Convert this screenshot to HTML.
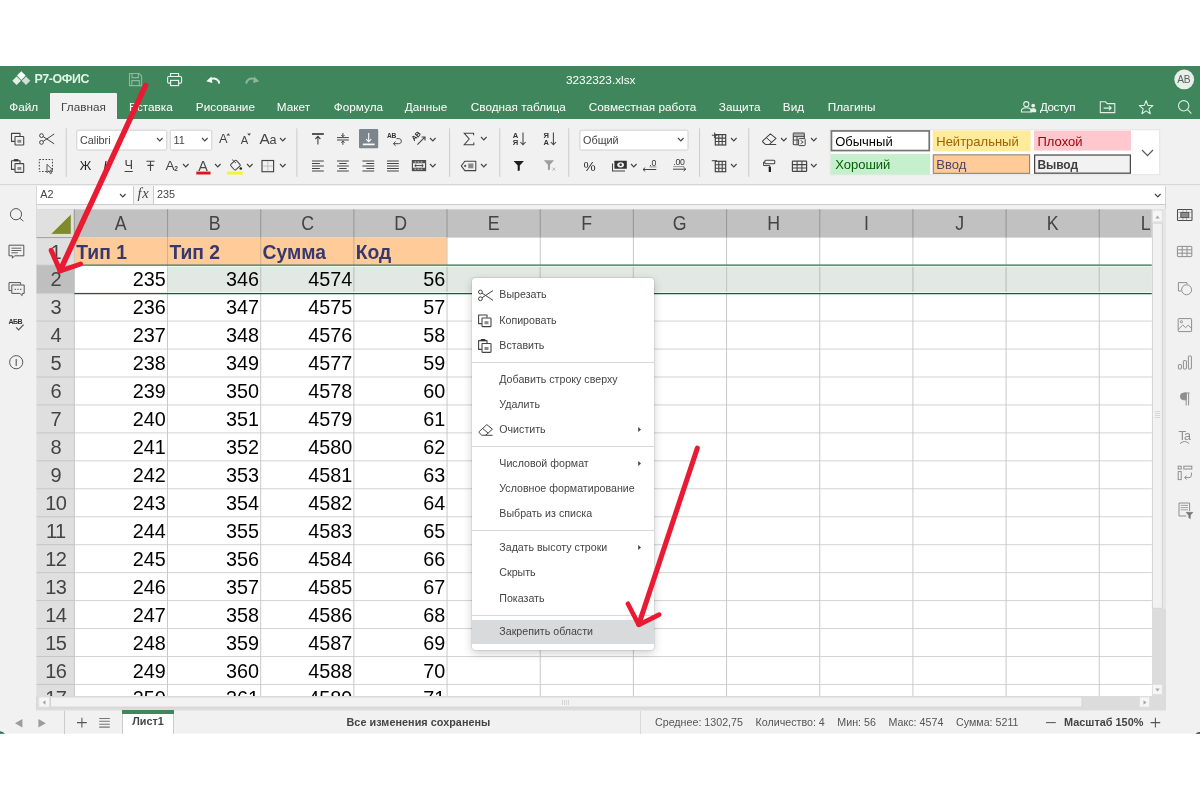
<!DOCTYPE html>
<html lang="ru"><head><meta charset="utf-8"><title>3232323.xlsx</title>
<style>
*{box-sizing:border-box}
html,body{margin:0;padding:0;background:#fff}
body{width:1200px;height:800px;overflow:hidden;position:relative;font-family:"Liberation Sans",sans-serif;font-size:10.8px;color:#444}
#app{position:absolute;left:0;top:0;width:1200px;height:800px;overflow:hidden;will-change:transform}
.a{position:absolute}
.t{position:absolute;white-space:nowrap;line-height:1}
svg{position:absolute;overflow:visible}
.ch{position:absolute;top:0;height:28px;line-height:29px;text-align:center;font-size:20.4px;color:#444;white-space:nowrap;transform:scaleX(.87)}
.rh{position:absolute;left:1px;width:38px;height:28px;line-height:29px;text-align:center;font-size:20px;color:#444;white-space:nowrap;letter-spacing:-0.6px;text-indent:-0.6px}
.c{position:absolute;height:28px;line-height:29px;text-align:right;font-size:19.8px;color:#000;white-space:nowrap;padding-right:1.7px}
.hc{position:absolute;height:28px;line-height:29px;font-size:19.3px;font-weight:bold;color:#38386c;white-space:nowrap;padding-left:1.9px}
.sep{position:absolute;width:1px;background:#cbcbcb;top:128.5px;height:48px}
</style></head>
<body>
<div id="app">
<div class="a" style="left:0px;top:66px;width:1200px;height:53px;background:#40865c;"></div>
<svg style="left:12px;top:70.5px" width="19" height="15" viewBox="0 0 19 15"><path d="M9.3 0.3 L13.6 4.6 L9.3 8.9 L5 4.6 Z" fill="#fff"/><path d="M4.6 5.4 L8.9 9.7 L4.6 14 L0.3 9.7 Z" fill="#e4efe8"/><path d="M14 5.4 L18.3 9.7 L14 14 L9.7 9.7 Z" fill="#cfe0d5"/></svg>
<div class="t" style="left:34.5px;top:72.70px;font-size:12.4px;color:#def7e6;font-weight:bold;letter-spacing:-0.4px;">Р7-ОФИС</div>
<div class="t" style="left:566px;top:75.01px;font-size:11.8px;color:#fff;">3232323.xlsx</div>
<svg style="left:1173px;top:68px" width="23" height="23" viewBox="1173 68 23 23"><circle cx="1184.2" cy="79.4" r="9.9" fill="#e8efea"/></svg>
<div class="t" style="left:1177.2px;top:74.57px;font-size:10.2px;color:#56655b;letter-spacing:-0.2px;">AB</div>
<div class="a" style="left:50px;top:93px;width:67px;height:27px;background:#f1f1f1;border-radius:1px 1px 0 0;"></div>
<div class="t" style="left:9.3px;top:100.65px;font-size:11.75px;color:#fff;">Файл</div>
<div class="t" style="left:61.1px;top:100.65px;font-size:11.75px;color:#444;">Главная</div>
<div class="t" style="left:129.1px;top:100.65px;font-size:11.75px;color:#fff;">Вставка</div>
<div class="t" style="left:195.8px;top:100.65px;font-size:11.75px;color:#fff;">Рисование</div>
<div class="t" style="left:276.8px;top:100.65px;font-size:11.75px;color:#fff;">Макет</div>
<div class="t" style="left:333.8px;top:100.65px;font-size:11.75px;color:#fff;">Формула</div>
<div class="t" style="left:404.8px;top:100.65px;font-size:11.75px;color:#fff;">Данные</div>
<div class="t" style="left:470.8px;top:100.65px;font-size:11.75px;color:#fff;">Сводная таблица</div>
<div class="t" style="left:588.8px;top:100.65px;font-size:11.75px;color:#fff;">Совместная работа</div>
<div class="t" style="left:718.8px;top:100.65px;font-size:11.75px;color:#fff;">Защита</div>
<div class="t" style="left:782.8px;top:100.65px;font-size:11.75px;color:#fff;">Вид</div>
<div class="t" style="left:827.8px;top:100.65px;font-size:11.75px;color:#fff;">Плагины</div>
<div class="t" style="left:1040px;top:100.78px;font-size:11.6px;color:#fff;letter-spacing:-0.45px;">Доступ</div>
<div class="a" style="left:0px;top:119px;width:1200px;height:66px;background:#f1f1f1;"></div>
<svg style="left:-1px;top:183px" width="1202" height="4" viewBox="0 0 1202 4"><rect x="1.00" y="1.30" width="1200.00" height="1.00" fill="#cbcbcb"/></svg>
<svg style="left:64px;top:127px" width="4" height="51" viewBox="0 0 4 51"><rect x="1.75" y="1.30" width="1.00" height="48.60" fill="#cbcbcb"/></svg>
<svg style="left:295px;top:127px" width="4" height="51" viewBox="0 0 4 51"><rect x="1.40" y="1.30" width="1.00" height="48.60" fill="#cbcbcb"/></svg>
<svg style="left:448px;top:127px" width="4" height="51" viewBox="0 0 4 51"><rect x="1.10" y="1.30" width="1.00" height="48.60" fill="#cbcbcb"/></svg>
<svg style="left:498px;top:127px" width="4" height="51" viewBox="0 0 4 51"><rect x="1.25" y="1.30" width="1.00" height="48.60" fill="#cbcbcb"/></svg>
<svg style="left:567px;top:127px" width="4" height="51" viewBox="0 0 4 51"><rect x="1.25" y="1.30" width="1.00" height="48.60" fill="#cbcbcb"/></svg>
<svg style="left:698px;top:127px" width="4" height="51" viewBox="0 0 4 51"><rect x="1.10" y="1.30" width="1.00" height="48.60" fill="#cbcbcb"/></svg>
<svg style="left:747px;top:127px" width="4" height="51" viewBox="0 0 4 51"><rect x="1.25" y="1.30" width="1.00" height="48.60" fill="#cbcbcb"/></svg>
<svg style="left:75px;top:128px" width="94" height="24" viewBox="0 0 94 24"><rect x="1.75" y="2.20" width="90.00" height="19.80" fill="#fff" stroke="#d0d0d0" stroke-width="1" rx="1.5"/></svg>
<div class="t" style="left:79.95px;top:135.36px;font-size:10.8px;color:#444;">Calibri</div>
<svg style="left:156.85px;top:138.45px" width="5.6" height="2.9" viewBox="0 0 5.6 2.9"><path d="M0 0 L2.8 2.9 L5.6 0" fill="none" stroke="#444" stroke-width="1.15"/></svg>
<svg style="left:168px;top:128px" width="46" height="24" viewBox="0 0 46 24"><rect x="2.25" y="2.20" width="41.50" height="19.80" fill="#fff" stroke="#d0d0d0" stroke-width="1" rx="1.5"/></svg>
<div class="t" style="left:173.45px;top:135.36px;font-size:10.8px;color:#444;">11</div>
<svg style="left:201.85px;top:138.45px" width="5.6" height="2.9" viewBox="0 0 5.6 2.9"><path d="M0 0 L2.8 2.9 L5.6 0" fill="none" stroke="#444" stroke-width="1.15"/></svg>
<svg style="left:578px;top:128px" width="112" height="24" viewBox="0 0 112 24"><rect x="1.90" y="2.20" width="108.10" height="19.80" fill="#fff" stroke="#d0d0d0" stroke-width="1" rx="1.5"/></svg>
<div class="t" style="left:583.1px;top:135.36px;font-size:10.8px;color:#444;">Общий</div>
<svg style="left:678.10px;top:138.45px" width="5.6" height="2.9" viewBox="0 0 5.6 2.9"><path d="M0 0 L2.8 2.9 L5.6 0" fill="none" stroke="#444" stroke-width="1.15"/></svg>
<svg style="left:828px;top:128px" width="334" height="49" viewBox="0 0 334 49"><rect x="2.10" y="1.80" width="329.60" height="44.90" fill="#fff" stroke="#e4e4e4" stroke-width="1"/></svg>
<svg style="left:829px;top:129px" width="103" height="24" viewBox="0 0 103 24"><rect x="2.45" y="1.95" width="97.80" height="19.60" fill="#fff" stroke="#747474" stroke-width="1.7"/></svg>
<div class="t" style="left:835.2px;top:135.00px;font-size:13px;color:#000;">Обычный</div>
<svg style="left:931px;top:129px" width="101" height="24" viewBox="0 0 101 24"><rect x="1.75" y="1.50" width="97.90" height="20.90" fill="#ffeb9c"/></svg>
<div class="t" style="left:936.25px;top:134.70px;font-size:13px;color:#9c6500;">Нейтральный</div>
<svg style="left:1033px;top:129px" width="99" height="23" viewBox="0 0 99 23"><rect x="1.00" y="1.60" width="97.00" height="20.00" fill="#ffc7ce"/></svg>
<div class="t" style="left:1037.5px;top:134.70px;font-size:13px;color:#9c0006;">Плохой</div>
<svg style="left:829px;top:152px" width="103" height="24" viewBox="0 0 103 24"><rect x="1.60" y="1.90" width="99.50" height="20.60" fill="#c6efce"/></svg>
<div class="t" style="left:835.2px;top:157.80px;font-size:13px;color:#006100;">Хороший</div>
<svg style="left:931px;top:153px" width="101" height="22" viewBox="0 0 101 22"><rect x="2.30" y="1.85" width="96.30" height="18.50" fill="#ffcc99" stroke="#8c8379" stroke-width="1.1"/></svg>
<div class="t" style="left:936.25px;top:158.40px;font-size:13px;color:#4a4468;">Ввод</div>
<svg style="left:1033px;top:153px" width="99" height="22" viewBox="0 0 99 22"><rect x="1.62" y="2.03" width="95.75" height="18.15" fill="#f2f2f2" stroke="#4a4a4a" stroke-width="1.25"/></svg>
<div class="t" style="left:1037.5px;top:158.84px;font-size:12px;color:#3f3f3f;font-weight:bold;letter-spacing:-0.1px;">Вывод</div>
<svg style="left:1141.80px;top:149.80px" width="11" height="5.6" viewBox="0 0 11 5.6"><path d="M0 0 L5.5 5.6 L11 0" fill="none" stroke="#555" stroke-width="1.2"/></svg>
<div class="a" style="left:0px;top:185.5px;width:1200px;height:24.5px;background:#f1f1f1;"></div>
<div class="a" style="left:36.5px;top:185.6px;width:1129px;height:19px;background:#fff;border-bottom:1px solid #cbcbcb;"></div>
<div class="a" style="left:133px;top:185.6px;width:20.5px;height:18.5px;background:#f4f4f4;border-left:1px solid #cbcbcb;border-right:1px solid #cbcbcb;"></div>
<div class="t" style="left:40.3px;top:189.46px;font-size:10.8px;color:#444;">A2</div>
<svg style="left:120.40px;top:193.85px" width="5.6" height="2.9" viewBox="0 0 5.6 2.9"><path d="M0 0 L2.8 2.9 L5.6 0" fill="none" stroke="#444" stroke-width="1.15"/></svg>
<div class="t" style="left:137.6px;top:186.44px;font-size:14.6px;color:#444;font-family:'Liberation Serif',serif;font-style:italic;letter-spacing:0.6px;">fx</div>
<div class="t" style="left:157px;top:189.46px;font-size:10.8px;color:#444;">235</div>
<svg style="left:1154.50px;top:193.85px" width="5.6" height="2.9" viewBox="0 0 5.6 2.9"><path d="M0 0 L2.8 2.9 L5.6 0" fill="none" stroke="#444" stroke-width="1.15"/></svg>
<div class="a" style="left:0px;top:185.5px;width:36.5px;height:525.5px;background:#f1f1f1;border-right:1px solid #d8d8d8;"></div>
<div class="a" style="left:1164.7px;top:185.5px;width:35.3px;height:525.5px;background:#f1f1f1;border-left:1px solid #d2d2d2;"></div>
<div class="a" style="left:36px;top:209px;width:1116px;height:488px;overflow:hidden">
<svg style="left:0;top:0" width="1116" height="488" viewBox="36 209 1116 488"><rect x="36.5" y="209.3" width="1115.3" height="487.1" fill="#fff"/><rect x="36.5" y="209.3" width="1115.3" height="28.3" fill="#c1c1c1"/><rect x="36.5" y="209.3" width="37.85" height="28.3" fill="#e0e0e0"/><rect x="36.5" y="237.6" width="37.85" height="458.8" fill="#dfdfdf"/><rect x="36.5" y="265.2" width="37.85" height="27.95" fill="#bfbfbf"/><rect x="167.525" y="265.2" width="984.275" height="27.95" fill="#e2e8e4"/><rect x="74.65" y="237.6" width="372.4" height="27.6" fill="#ffcc99"/><path d="M74.35 293.15 H1151.8 M74.35 321.10 H1151.8 M74.35 349.05 H1151.8 M74.35 377.00 H1151.8 M74.35 404.95 H1151.8 M74.35 432.90 H1151.8 M74.35 460.85 H1151.8 M74.35 488.80 H1151.8 M74.35 516.75 H1151.8 M74.35 544.70 H1151.8 M74.35 572.65 H1151.8 M74.35 600.60 H1151.8 M74.35 628.55 H1151.8 M74.35 656.50 H1151.8 M74.35 684.45 H1151.8 M74.35 712.40 H1151.8 M447.05 265.20 H1151.8 " stroke="#d3d3d3" stroke-width="1" fill="none"/><path d="M167.52 237.6 V696.4 M260.70 237.6 V696.4 M353.88 237.6 V696.4 M447.05 237.6 V696.4 M540.23 237.6 V696.4 M633.40 237.6 V696.4 M726.58 237.6 V696.4 M819.75 237.6 V696.4 M912.92 237.6 V696.4 M1006.10 237.6 V696.4 M1099.27 237.6 V696.4 M1192.45 237.6 V696.4 " stroke="#c9c9c9" stroke-width="1" fill="none"/><path d="M260.70 265.20 V293.15 M353.88 265.20 V293.15 M447.05 265.20 V293.15 M540.23 265.20 V293.15 M633.40 265.20 V293.15 M726.58 265.20 V293.15 M819.75 265.20 V293.15 M912.92 265.20 V293.15 M1006.10 265.20 V293.15 M1099.27 265.20 V293.15 M1192.45 265.20 V293.15 " stroke="#c3c9c5" stroke-width="1" fill="none"/><path d="M167.52 237.60 V265.20 M260.70 237.60 V265.20 M353.88 237.60 V265.20 " stroke="#d2b18b" stroke-width="1" fill="none"/><path d="M36.5 265.20 H74.35 M36.5 293.15 H74.35 M36.5 321.10 H74.35 M36.5 349.05 H74.35 M36.5 377.00 H74.35 M36.5 404.95 H74.35 M36.5 432.90 H74.35 M36.5 460.85 H74.35 M36.5 488.80 H74.35 M36.5 516.75 H74.35 M36.5 544.70 H74.35 M36.5 572.65 H74.35 M36.5 600.60 H74.35 M36.5 628.55 H74.35 M36.5 656.50 H74.35 M36.5 684.45 H74.35 M36.5 712.40 H74.35 M74.35 237.6 V696.4 " stroke="#c6c6c6" stroke-width="1" fill="none"/><path d="M74.35 209.3 V237.6 M167.52 209.3 V237.6 M260.70 209.3 V237.6 M353.88 209.3 V237.6 M447.05 209.3 V237.6 M540.23 209.3 V237.6 M633.40 209.3 V237.6 M726.58 209.3 V237.6 M819.75 209.3 V237.6 M912.92 209.3 V237.6 M1006.10 209.3 V237.6 M1099.27 209.3 V237.6 M1192.45 209.3 V237.6 " stroke="#999" stroke-width="1.1" fill="none"/><path d="M36.5 237.6 H74.35" stroke="#a0a0a0" stroke-width="1" fill="none"/><path d="M167.525 266.30 H1151.8 M167.525 292.35 H1151.8" stroke="#edfaf1" stroke-width="1" fill="none"/><path d="M74.35 265.10 H1151.8" stroke="#3a7856" stroke-width="1.2" fill="none"/><path d="M74.35 293.55 H1151.8" stroke="#2b5540" stroke-width="1.2" fill="none"/><path d="M71.3 213.5 V234.4 H50.2 Z" fill="#7f8a2e" stroke="#ece8c8" stroke-width="1" stroke-linejoin="round"/></svg>
<div class="ch" style="left:38.35px;width:93.175px">A</div>
<div class="ch" style="left:131.52px;width:93.175px">B</div>
<div class="ch" style="left:224.70px;width:93.175px">C</div>
<div class="ch" style="left:317.88px;width:93.175px">D</div>
<div class="ch" style="left:411.05px;width:93.175px">E</div>
<div class="ch" style="left:504.23px;width:93.175px">F</div>
<div class="ch" style="left:597.40px;width:93.175px">G</div>
<div class="ch" style="left:690.58px;width:93.175px">H</div>
<div class="ch" style="left:783.75px;width:93.175px">I</div>
<div class="ch" style="left:876.92px;width:93.175px">J</div>
<div class="ch" style="left:970.10px;width:93.175px">K</div>
<div class="ch" style="left:1063.27px;width:93.175px">L</div>
<div class="rh" style="top:28.60px">1</div>
<div class="rh" style="top:56.20px">2</div>
<div class="rh" style="top:84.15px">3</div>
<div class="rh" style="top:112.10px">4</div>
<div class="rh" style="top:140.05px">5</div>
<div class="rh" style="top:168.00px">6</div>
<div class="rh" style="top:195.95px">7</div>
<div class="rh" style="top:223.90px">8</div>
<div class="rh" style="top:251.85px">9</div>
<div class="rh" style="top:279.80px">10</div>
<div class="rh" style="top:307.75px">11</div>
<div class="rh" style="top:335.70px">12</div>
<div class="rh" style="top:363.65px">13</div>
<div class="rh" style="top:391.60px">14</div>
<div class="rh" style="top:419.55px">15</div>
<div class="rh" style="top:447.50px">16</div>
<div class="rh" style="top:475.45px">17</div>
<div class="hc" style="left:38.35px;top:28.60px;width:93.175px">Тип 1</div>
<div class="hc" style="left:131.52px;top:28.60px;width:93.175px">Тип 2</div>
<div class="hc" style="left:224.70px;top:28.60px;width:93.175px">Сумма</div>
<div class="hc" style="left:317.88px;top:28.60px;width:93.175px">Код</div>
<div class="c" style="left:38.35px;top:56.20px;width:93.175px">235</div>
<div class="c" style="left:131.52px;top:56.20px;width:93.175px">346</div>
<div class="c" style="left:224.70px;top:56.20px;width:93.175px">4574</div>
<div class="c" style="left:317.88px;top:56.20px;width:93.175px">56</div>
<div class="c" style="left:38.35px;top:84.15px;width:93.175px">236</div>
<div class="c" style="left:131.52px;top:84.15px;width:93.175px">347</div>
<div class="c" style="left:224.70px;top:84.15px;width:93.175px">4575</div>
<div class="c" style="left:317.88px;top:84.15px;width:93.175px">57</div>
<div class="c" style="left:38.35px;top:112.10px;width:93.175px">237</div>
<div class="c" style="left:131.52px;top:112.10px;width:93.175px">348</div>
<div class="c" style="left:224.70px;top:112.10px;width:93.175px">4576</div>
<div class="c" style="left:317.88px;top:112.10px;width:93.175px">58</div>
<div class="c" style="left:38.35px;top:140.05px;width:93.175px">238</div>
<div class="c" style="left:131.52px;top:140.05px;width:93.175px">349</div>
<div class="c" style="left:224.70px;top:140.05px;width:93.175px">4577</div>
<div class="c" style="left:317.88px;top:140.05px;width:93.175px">59</div>
<div class="c" style="left:38.35px;top:168.00px;width:93.175px">239</div>
<div class="c" style="left:131.52px;top:168.00px;width:93.175px">350</div>
<div class="c" style="left:224.70px;top:168.00px;width:93.175px">4578</div>
<div class="c" style="left:317.88px;top:168.00px;width:93.175px">60</div>
<div class="c" style="left:38.35px;top:195.95px;width:93.175px">240</div>
<div class="c" style="left:131.52px;top:195.95px;width:93.175px">351</div>
<div class="c" style="left:224.70px;top:195.95px;width:93.175px">4579</div>
<div class="c" style="left:317.88px;top:195.95px;width:93.175px">61</div>
<div class="c" style="left:38.35px;top:223.90px;width:93.175px">241</div>
<div class="c" style="left:131.52px;top:223.90px;width:93.175px">352</div>
<div class="c" style="left:224.70px;top:223.90px;width:93.175px">4580</div>
<div class="c" style="left:317.88px;top:223.90px;width:93.175px">62</div>
<div class="c" style="left:38.35px;top:251.85px;width:93.175px">242</div>
<div class="c" style="left:131.52px;top:251.85px;width:93.175px">353</div>
<div class="c" style="left:224.70px;top:251.85px;width:93.175px">4581</div>
<div class="c" style="left:317.88px;top:251.85px;width:93.175px">63</div>
<div class="c" style="left:38.35px;top:279.80px;width:93.175px">243</div>
<div class="c" style="left:131.52px;top:279.80px;width:93.175px">354</div>
<div class="c" style="left:224.70px;top:279.80px;width:93.175px">4582</div>
<div class="c" style="left:317.88px;top:279.80px;width:93.175px">64</div>
<div class="c" style="left:38.35px;top:307.75px;width:93.175px">244</div>
<div class="c" style="left:131.52px;top:307.75px;width:93.175px">355</div>
<div class="c" style="left:224.70px;top:307.75px;width:93.175px">4583</div>
<div class="c" style="left:317.88px;top:307.75px;width:93.175px">65</div>
<div class="c" style="left:38.35px;top:335.70px;width:93.175px">245</div>
<div class="c" style="left:131.52px;top:335.70px;width:93.175px">356</div>
<div class="c" style="left:224.70px;top:335.70px;width:93.175px">4584</div>
<div class="c" style="left:317.88px;top:335.70px;width:93.175px">66</div>
<div class="c" style="left:38.35px;top:363.65px;width:93.175px">246</div>
<div class="c" style="left:131.52px;top:363.65px;width:93.175px">357</div>
<div class="c" style="left:224.70px;top:363.65px;width:93.175px">4585</div>
<div class="c" style="left:317.88px;top:363.65px;width:93.175px">67</div>
<div class="c" style="left:38.35px;top:391.60px;width:93.175px">247</div>
<div class="c" style="left:131.52px;top:391.60px;width:93.175px">358</div>
<div class="c" style="left:224.70px;top:391.60px;width:93.175px">4586</div>
<div class="c" style="left:317.88px;top:391.60px;width:93.175px">68</div>
<div class="c" style="left:38.35px;top:419.55px;width:93.175px">248</div>
<div class="c" style="left:131.52px;top:419.55px;width:93.175px">359</div>
<div class="c" style="left:224.70px;top:419.55px;width:93.175px">4587</div>
<div class="c" style="left:317.88px;top:419.55px;width:93.175px">69</div>
<div class="c" style="left:38.35px;top:447.50px;width:93.175px">249</div>
<div class="c" style="left:131.52px;top:447.50px;width:93.175px">360</div>
<div class="c" style="left:224.70px;top:447.50px;width:93.175px">4588</div>
<div class="c" style="left:317.88px;top:447.50px;width:93.175px">70</div>
<div class="c" style="left:38.35px;top:475.45px;width:93.175px">250</div>
<div class="c" style="left:131.52px;top:475.45px;width:93.175px">361</div>
<div class="c" style="left:224.70px;top:475.45px;width:93.175px">4589</div>
<div class="c" style="left:317.88px;top:475.45px;width:93.175px">71</div>
</div>
<div class="a" style="left:1151.5px;top:209px;width:14px;height:502px;background:#dcdcdc;"></div>
<div class="a" style="left:36.5px;top:696.3px;width:1129px;height:14.4px;background:#dcdcdc;"></div>
<div class="a" style="left:1152px;top:209px;width:13.5px;height:400px;background:#e6e6e6;"></div>
<svg style="left:1150px;top:221px" width="14" height="389" viewBox="0 0 14 389"><rect x="2.40" y="2.10" width="9.90" height="385.20" fill="#f2f2f2" stroke="#d4d4d4" stroke-width="1"/></svg>
<svg style="left:1150px;top:208px" width="14" height="16" viewBox="0 0 14 16"><rect x="2.40" y="2.10" width="9.90" height="11.80" fill="#f6f6f6" stroke="#dedede" stroke-width="1"/></svg>
<svg style="left:1150px;top:682px" width="14" height="15" viewBox="0 0 14 15"><rect x="2.40" y="2.30" width="9.90" height="10.40" fill="#f6f6f6" stroke="#dedede" stroke-width="1"/></svg>
<svg style="left:1155.1px;top:214.5px" width="5" height="4" viewBox="0 0 5 4"><path d="M2.5 0.5 L4.7 3.5 L0.3 3.5 Z" fill="#a6a6a6"/></svg>
<svg style="left:1155px;top:687.6px" width="5" height="4" viewBox="0 0 5 4"><path d="M2.5 3.5 L4.7 0.5 L0.3 0.5 Z" fill="#a6a6a6"/></svg>
<div class="a" style="left:1155px;top:411px;width:5px;height:1px;background:#d6d6d6;"></div>
<div class="a" style="left:1155px;top:413px;width:5px;height:1px;background:#d6d6d6;"></div>
<div class="a" style="left:1155px;top:415px;width:5px;height:1px;background:#d6d6d6;"></div>
<div class="a" style="left:1155px;top:417px;width:5px;height:1px;background:#d6d6d6;"></div>
<svg style="left:37px;top:695px" width="14" height="14" viewBox="0 0 14 14"><rect x="1.70" y="1.90" width="10.80" height="10.20" fill="#f6f6f6" stroke="#dedede" stroke-width="1"/></svg>
<svg style="left:49px;top:695px" width="1035" height="14" viewBox="0 0 1035 14"><rect x="1.50" y="1.90" width="1031.60" height="10.20" fill="#f2f2f2" stroke="#d4d4d4" stroke-width="1"/></svg>
<svg style="left:1137px;top:695px" width="15" height="14" viewBox="0 0 15 14"><rect x="2.30" y="1.90" width="10.40" height="10.20" fill="#f6f6f6" stroke="#dedede" stroke-width="1"/></svg>
<svg style="left:42px;top:699.8px" width="4" height="5" viewBox="0 0 4 5"><path d="M0.5 2.5 L3.5 0.3 L3.5 4.7 Z" fill="#a6a6a6"/></svg>
<svg style="left:1142.8px;top:699.8px" width="4" height="5" viewBox="0 0 4 5"><path d="M3.5 2.5 L0.5 0.3 L0.5 4.7 Z" fill="#a6a6a6"/></svg>
<div class="a" style="left:562px;top:700px;width:1px;height:5px;background:#d6d6d6;"></div>
<div class="a" style="left:564px;top:700px;width:1px;height:5px;background:#d6d6d6;"></div>
<div class="a" style="left:566px;top:700px;width:1px;height:5px;background:#d6d6d6;"></div>
<div class="a" style="left:568px;top:700px;width:1px;height:5px;background:#d6d6d6;"></div>
<svg style="left:-1px;top:709px" width="1202" height="26" viewBox="0 0 1202 26"><rect x="1.00" y="1.40" width="1200.00" height="23.30" fill="#f1f1f1"/></svg>
<div class="a" style="left:122.4px;top:710.6px;width:52px;height:23.2px;background:#fff;border-left:1px solid #cbcbcb;border-right:1px solid #cbcbcb;"></div>
<div class="a" style="left:122.4px;top:710px;width:52px;height:3.7px;background:#40865c;"></div>
<div class="t" style="left:132.3px;top:716.46px;font-size:10.8px;color:#444;font-weight:bold;">Лист1</div>
<div class="a" style="left:64px;top:711px;width:1px;height:22.5px;background:#cbcbcb;"></div>
<div class="a" style="left:640px;top:711px;width:1px;height:22.5px;background:#d9d9d9;"></div>
<div class="t" style="left:346.5px;top:716.66px;font-size:10.8px;color:#444;font-weight:bold;letter-spacing:0.05px;">Все изменения сохранены</div>
<div class="t" style="left:655px;top:716.74px;font-size:10.7px;color:#555;">Среднее: 1302,75</div>
<div class="t" style="left:755.5px;top:716.74px;font-size:10.7px;color:#555;">Количество: 4</div>
<div class="t" style="left:837.3px;top:716.74px;font-size:10.7px;color:#555;">Мин: 56</div>
<div class="t" style="left:888.5px;top:716.74px;font-size:10.7px;color:#555;">Макс: 4574</div>
<div class="t" style="left:956px;top:716.74px;font-size:10.7px;color:#555;">Сумма: 5211</div>
<div class="t" style="left:1064px;top:716.57px;font-size:10.9px;color:#444;font-weight:bold;">Масштаб 150%</div>
<svg style="left:0;top:730px" width="6" height="4" viewBox="0 0 6 4"><path d="M0 1.2 Q3 1.6 5 3.8 L0 3.8 Z" fill="#2f6f4b"/></svg>
<svg style="left:1194px;top:730px" width="6" height="4" viewBox="0 0 6 4"><path d="M6 2 Q3 2.2 1.5 3.8 L6 3.8 Z" fill="#3a3a3a"/></svg>
<svg style="left:0;top:0" width="1200" height="800" viewBox="0 0 1200 800">
<g stroke="#fff" fill="none" stroke-width="1.1" opacity=".42"><path d="M129.5 73.5 H139.2 L141.6 75.9 V85.6 H129.5 Z"/><path d="M132 73.7 V77.6 H138.4 V73.7"/><path d="M131.8 85.4 V80.6 H139.3 V85.4"/></g>
<g stroke="#fff" fill="none" stroke-width="1.1" opacity=".9"><path d="M170.6 76.4 V73.5 H178.6 V76.4"/><rect x="167.6" y="76.5" width="14" height="6.6" rx="1.2"/><rect x="170.6" y="80.4" width="8" height="5.2" fill="#40865c"/></g>
<g opacity=".95"><path d="M219.2 83.6 C219 79.8 215.6 77.6 211 78.9" stroke="#fff" stroke-width="1.9" fill="none"/><path d="M206.3 81.3 L211.4 76.6 L212.4 83 Z" fill="#fff"/></g>
<g opacity=".4"><path d="M246.3 83.6 C246.5 79.8 249.9 77.6 254.5 78.9" stroke="#fff" stroke-width="1.9" fill="none"/><path d="M259.2 81.3 L254.1 76.6 L253.1 83 Z" fill="#fff"/></g>
<g stroke="#e3f1e7" fill="none" stroke-width="1.05"><circle cx="1026.3" cy="104.2" r="2.6"/><path d="M1021.4 112 V110.8 C1021.4 108.7 1023.4 107.7 1026.3 107.7 C1029.2 107.7 1031.2 108.7 1031.2 110.8 V112 Z"/><path d="M1100.3 101.8 H1105.6 L1107.2 103.6 H1114.8 V112.6 H1100.3 Z"/><path d="M1103.6 108.1 H1111.2 M1108.9 105.8 L1111.2 108.1 L1108.9 110.4"/><path d="M1146.1 100.6 L1147.9 105.4 L1152.9 105.6 L1149 108.8 L1150.3 113.7 L1146.1 110.9 L1141.9 113.7 L1143.2 108.8 L1139.3 105.6 L1144.3 105.4 Z" stroke-linejoin="round"/><circle cx="1183.7" cy="105.8" r="5.2"/><path d="M1187.5 109.7 L1191.4 113.7"/></g>
<g fill="#e3f1e7"><circle cx="1033.2" cy="105.6" r="1.9"/><path d="M1030.3 112.3 V110.2 C1030.3 108.7 1031.5 108.2 1033.2 108.2 C1034.9 108.2 1036.2 108.7 1036.2 110.2 V112.3 Z"/></g>
<g stroke="#444" fill="none" stroke-width="1">
<path d="M14.8 141.4 H11.5 V133.4 H20 V136.2" stroke-width="1.1" stroke-linejoin="round"/><rect x="15" y="136.5" width="8.7" height="8.5" rx=".6" stroke-width="1.1"/><path d="M14.8 169.4 H11.5 V160.8 H20 V163.2" stroke-width="1.1" stroke-linejoin="round"/><rect x="15" y="163.6" width="8.7" height="8.8" rx=".6" stroke-width="1.1"/><circle cx="41.5" cy="135.6" r="1.9"/><circle cx="41.5" cy="142.4" r="1.9"/><path d="M43.1 136.6 L54.2 143.8 M43.1 141.4 L54.2 134"/><rect x="39.3" y="159.5" width="13.2" height="12" stroke-dasharray="1.6 1.5"/><path d="M47 164.3 V172.6 L49 170.8 L50.4 173.8 L51.6 173.2 L50.3 170.3 L52.9 170.1 Z" fill="#f1f1f1" stroke-width=".9"/><path d="M146.4 161.3 H154.6 M150.5 161.3 V171 M147.4 165.4 H153.7" stroke-width="1.1"/><path d="M124.6 171.5 H132.8" stroke-width="1"/><rect x="231.5" y="161.5" width="7.8" height="7.3" rx="1.3" transform="rotate(-42 235.4 165.1)" stroke-width="1.05"/><path d="M232.2 159.7 L235.8 162.9" stroke-width="1"/><rect x="262" y="160.5" width="11.6" height="11.2" stroke-width="1.15"/><path d="M267.8 161 V171.3 M262.4 166.1 H273.2" stroke="#b4b4b4" stroke-width=".8"/><path d="M312 134 H323.8" stroke-width="1.8"/><path d="M317.9 136.5 V144.4 M315.4 139 L317.9 136.4 L320.4 139" stroke-width="1.1"/><path d="M337 137.6 H348.8 M337 140 H348.8" stroke-width="1"/><path d="M342.9 133 V136.6 M341.3 135 L342.9 136.7 L344.5 135 M342.9 144.8 V141 M341.3 142.7 L342.9 141 L344.5 142.7" stroke-width="1"/><path d="M396.5 138.6 H398.6 C400.4 138.6 401.3 139.6 401.3 141.2 C401.3 142.8 400.4 143.7 398.6 143.7 H393.5 M395.6 141.6 L393.4 143.7 L395.6 145.8" stroke-width="1"/><path d="M417.4 144.6 L424.6 137.4 M421.6 137 H425 V140.4" stroke-width="1.1"/><path d="M312.0 160.90 H323.8 M312.0 163.42 H319.8 M312.0 165.94 H323.8 M312.0 168.46 H319.8 M312.0 170.98 H323.8 " stroke-width="1.05"/><path d="M337.0 160.90 H348.8 M339.2 163.42 H346.6 M337.0 165.94 H348.8 M339.2 168.46 H346.6 M337.0 170.98 H348.8 " stroke-width="1.05"/><path d="M362.4 160.90 H374.2 M366.4 163.42 H374.2 M362.4 165.94 H374.2 M366.4 168.46 H374.2 M362.4 170.98 H374.2 " stroke-width="1.05"/><path d="M387.0 160.90 H398.8 M387.0 163.42 H398.8 M387.0 165.94 H398.8 M387.0 168.46 H398.8 M387.0 170.98 H398.8 " stroke-width="1.05"/><rect x="412.4" y="160.6" width="13.2" height="10" stroke-width="1.1" fill="#f1f1f1"/><path d="M412.4 162.2 H425.6 M412.4 169 H425.6" stroke-width="2.3" stroke="#555"/><path d="M414.6 162 H416.2 M417.6 162 H419.2 M420.6 162 H422.2 M414.6 169.2 H416.2 M417.6 169.2 H419.2 M420.6 169.2 H422.2" stroke="#e4e4e4" stroke-width=".9"/><path d="M414.8 165.6 H423.2 M416.3 164.2 L414.8 165.6 L416.3 167 M421.7 164.2 L423.2 165.6 L421.7 167" stroke-width="1"/><path d="M473.6 135.3 V133.2 H464.2 L469.2 139 L464.2 144.7 H473.8 V142.4" stroke-width="1.05" stroke-linejoin="miter"/><path d="M464.8 161.2 H475.8 V170.6 H464.8 L461.3 165.9 Z" stroke-width="1.05" stroke-linejoin="round"/><circle cx="465.2" cy="165.9" r=".7" fill="#444"/><path d="M523 132.6 V144.6 M520.4 142 L523 144.8 L525.6 142" stroke-width="1.05"/><path d="M553.4 132.6 V144.6 M550.8 142 L553.4 144.8 L556 142" stroke-width="1.05"/><path d="M612.5 163.6 V170.9 H625" stroke-width="1.05"/><path d="M643 169.5 H656.3 M645.2 167.6 L643 169.5 L645.2 171.4" stroke-width="1"/><path d="M673 169.2 H685.8 M683.6 167.3 L685.8 169.2 L683.6 171.1" stroke-width="1"/><path d="M649.4 166.9 H656.6 M673.2 166.6 H684" stroke-width=".7" opacity=".75"/><rect x="715.3" y="134.6" width="10.4" height="10.4" stroke-width="1.2"/><path d="M718.8 134.6 V145.0 M722.2 134.6 V145.0 M715.3 138.1 H725.7 M715.3 141.5 H725.7" stroke-width="1.1"/><rect x="715.3" y="161.3" width="10.4" height="10.4" stroke-width="1.2"/><path d="M718.8 161.3 V171.7 M722.2 161.3 V171.7 M715.3 164.8 H725.7 M715.3 168.2 H725.7" stroke-width="1.1"/><path d="M711.9 135.2 H717.6 M714.7 132.4 V138" stroke-width="1.05"/><path d="M711.8 160.7 H717" stroke-width="1.05"/><path d="M770.4 133.8 L776 138.4 L769.4 144.4 H765.4 L762.8 142 Q762.3 141.3 763 140.6 Z" stroke-width="1.05" stroke-linejoin="round"/><path d="M766.2 137.6 L771.8 142.4 M769 144.5 H776.2" stroke-width="1"/><rect x="793.3" y="133" width="11" height="11.8" stroke-width="1.1" rx=".8"/><path d="M793.3 136.6 H804.3 M793.3 140 H798.5 M797 136.6 V144.8" stroke-width="1"/><rect x="798.6" y="138.6" width="6.6" height="7" fill="#f1f1f1" stroke-width="1" rx=".8"/><path d="M800.6 140.4 L803.2 142.1 L800.6 143.8" stroke-width=".9"/><rect x="764.8" y="160.2" width="10" height="3.6" rx="1" stroke-width="1.05"/><path d="M764.8 162 H763.6 V165.6 H769.8 V167.2" stroke-width="1"/><rect x="792.4" y="161.2" width="14.2" height="10.2" stroke-width="1.2" rx=".6"/><path d="M797.1 161.2 V171.4 M801.9 161.2 V171.4 M792.4 164.6 H806.6 M792.4 168 H806.6" stroke-width="1.05"/></g>
<g fill="#444"><rect x="17.4" y="139.8" width="3.9" height="2.9" fill="#8a8a8a"/><rect x="17.4" y="167" width="3.9" height="2.9" fill="#8a8a8a"/><rect x="13.8" y="159.1" width="4.6" height="2.1" fill="#333"/><circle cx="240.8" cy="168.5" r="1.3" fill="#222"/><path d="M226.4 135.4 L228.3 133.2 L230.2 135.4 Z"/><path d="M247.2 133.6 L251 133.6 L249.1 135.8 Z"/><path d="M513.6 161 H523.9 L519.8 165.6 V170.4 L517.7 171 V165.6 Z" fill="#1e1e1e"/><path d="M543.8 160.2 H554.1 L550 164.8 V169.6 L547.9 170.2 V164.8 Z" fill="#9d9d9d"/><path d="M552.4 167.6 L555.4 170.6 M555.4 167.6 L552.4 170.6" stroke="#b2b2b2" stroke-width=".9" fill="none"/><rect x="468.2" y="163.5" width="5.2" height="4.8" fill="#8a8a8a"/><rect x="614.4" y="160.8" width="12.4" height="8" rx=".5" fill="#333"/><ellipse cx="620.6" cy="164.8" rx="3.4" ry="2.6" fill="#f1f1f1"/><circle cx="620.6" cy="164.8" r="1.25" fill="#333"/><rect x="768.7" y="166.8" width="2.3" height="5.3" rx=".5" fill="#222"/><rect x="793.3" y="133" width="11" height="3.2" fill="#777" opacity=".55"/></g>
<rect x="196.3" y="171.6" width="14.2" height="2.9" fill="#e0141e"/><rect x="227.2" y="171.6" width="15.7" height="3" fill="#f6f336"/>
<rect x="359" y="129" width="19.2" height="19.2" rx="1" fill="#7d858c"/><g stroke="#fff" fill="none"><path d="M362.8 144.4 H374.6" stroke-width="1.7"/><path d="M368.7 133 V141.6 M366.2 139.2 L368.7 141.8 L371.2 139.2" stroke-width="1.1"/></g>
</svg>
<div class="t" style="left:79.8px;top:160.10px;font-size:12.4px;color:#222;">Ж</div>
<div class="t" style="left:103.6px;top:160.44px;font-size:12px;color:#222;font-style:italic;">К</div>
<div class="t" style="left:124.6px;top:158.96px;font-size:12.8px;color:#444;">Ч</div>
<div class="t" style="left:165.4px;top:159.29px;font-size:13.6px;color:#444;">A</div>
<div class="t" style="left:174.3px;top:166.01px;font-size:6.6px;color:#444;font-weight:bold;">2</div>
<div class="t" style="left:198.3px;top:158.81px;font-size:14.4px;color:#4a4a4a;">A</div>
<div class="t" style="left:219.1px;top:133.16px;font-size:12.8px;color:#444;">A</div>
<div class="t" style="left:240.8px;top:134.52px;font-size:11.2px;color:#444;">A</div>
<div class="t" style="left:259.6px;top:131.16px;font-size:15.4px;color:#444;">A</div>
<div class="t" style="left:269.4px;top:133.53px;font-size:12.6px;color:#444;">a</div>
<div class="t" style="left:386.9px;top:133.21px;font-size:6.6px;color:#333;font-weight:bold;letter-spacing:-0.2px;">AB</div>
<div class="t" style="left:415px;top:135.47px;font-size:7px;color:#222;font-weight:bold;letter-spacing:-0.2px;transform:rotate(-45deg);transform-origin:0 100%;">AB</div>
<div class="t" style="left:512.8px;top:131.97px;font-size:7.6px;color:#333;font-weight:bold;">A</div>
<div class="t" style="left:512.8px;top:138.57px;font-size:7.6px;color:#333;font-weight:bold;">Я</div>
<div class="t" style="left:543.6px;top:131.97px;font-size:7.6px;color:#333;font-weight:bold;">Я</div>
<div class="t" style="left:543.6px;top:138.57px;font-size:7.6px;color:#333;font-weight:bold;">A</div>
<div class="t" style="left:583.4px;top:159.90px;font-size:13.7px;color:#333;">%</div>
<div class="t" style="left:649.3px;top:158.55px;font-size:8.8px;color:#333;letter-spacing:-0.2px;">.0</div>
<div class="t" style="left:673.3px;top:158.45px;font-size:8.8px;color:#333;letter-spacing:-0.3px;">.00</div>
<svg style="left:279.80px;top:137.55px" width="5.6" height="2.9" viewBox="0 0 5.6 2.9"><path d="M0 0 L2.8 2.9 L5.6 0" fill="none" stroke="#444" stroke-width="1.15"/></svg>
<svg style="left:183.20px;top:164.05px" width="5.6" height="2.9" viewBox="0 0 5.6 2.9"><path d="M0 0 L2.8 2.9 L5.6 0" fill="none" stroke="#444" stroke-width="1.15"/></svg>
<svg style="left:215.20px;top:164.05px" width="5.6" height="2.9" viewBox="0 0 5.6 2.9"><path d="M0 0 L2.8 2.9 L5.6 0" fill="none" stroke="#444" stroke-width="1.15"/></svg>
<svg style="left:247.20px;top:164.05px" width="5.6" height="2.9" viewBox="0 0 5.6 2.9"><path d="M0 0 L2.8 2.9 L5.6 0" fill="none" stroke="#444" stroke-width="1.15"/></svg>
<svg style="left:279.80px;top:164.05px" width="5.6" height="2.9" viewBox="0 0 5.6 2.9"><path d="M0 0 L2.8 2.9 L5.6 0" fill="none" stroke="#444" stroke-width="1.15"/></svg>
<svg style="left:430.00px;top:137.55px" width="5.6" height="2.9" viewBox="0 0 5.6 2.9"><path d="M0 0 L2.8 2.9 L5.6 0" fill="none" stroke="#444" stroke-width="1.15"/></svg>
<svg style="left:430.00px;top:164.05px" width="5.6" height="2.9" viewBox="0 0 5.6 2.9"><path d="M0 0 L2.8 2.9 L5.6 0" fill="none" stroke="#444" stroke-width="1.15"/></svg>
<svg style="left:480.70px;top:137.15px" width="5.6" height="2.9" viewBox="0 0 5.6 2.9"><path d="M0 0 L2.8 2.9 L5.6 0" fill="none" stroke="#444" stroke-width="1.15"/></svg>
<svg style="left:480.70px;top:164.35px" width="5.6" height="2.9" viewBox="0 0 5.6 2.9"><path d="M0 0 L2.8 2.9 L5.6 0" fill="none" stroke="#444" stroke-width="1.15"/></svg>
<svg style="left:630.70px;top:164.15px" width="5.6" height="2.9" viewBox="0 0 5.6 2.9"><path d="M0 0 L2.8 2.9 L5.6 0" fill="none" stroke="#444" stroke-width="1.15"/></svg>
<svg style="left:730.70px;top:137.55px" width="5.6" height="2.9" viewBox="0 0 5.6 2.9"><path d="M0 0 L2.8 2.9 L5.6 0" fill="none" stroke="#444" stroke-width="1.15"/></svg>
<svg style="left:730.70px;top:164.35px" width="5.6" height="2.9" viewBox="0 0 5.6 2.9"><path d="M0 0 L2.8 2.9 L5.6 0" fill="none" stroke="#444" stroke-width="1.15"/></svg>
<svg style="left:781.20px;top:137.55px" width="5.6" height="2.9" viewBox="0 0 5.6 2.9"><path d="M0 0 L2.8 2.9 L5.6 0" fill="none" stroke="#444" stroke-width="1.15"/></svg>
<svg style="left:810.90px;top:137.55px" width="5.6" height="2.9" viewBox="0 0 5.6 2.9"><path d="M0 0 L2.8 2.9 L5.6 0" fill="none" stroke="#444" stroke-width="1.15"/></svg>
<svg style="left:810.90px;top:164.35px" width="5.6" height="2.9" viewBox="0 0 5.6 2.9"><path d="M0 0 L2.8 2.9 L5.6 0" fill="none" stroke="#444" stroke-width="1.15"/></svg>
<svg style="left:0;top:0" width="1200" height="800" viewBox="0 0 1200 800"><g stroke="#555" fill="none" stroke-width="1"><circle cx="16" cy="214.2" r="5.6"/><path d="M20 218.3 L23.4 221.2"/><path d="M9 245.2 H23.8 V255.8 H14.6 L12.4 258.2 V255.8 H9 Z" stroke-linejoin="round"/><path d="M11.4 248.2 H21.4 M11.4 250.5 H21.4 M11.4 252.8 H17.8" stroke-width=".9"/><path d="M11.6 290.6 H9 V282.6 H20.6 V284.6"/><path d="M11.8 285 H24.2 V293.4 H22.2 V295.6 L19.8 293.4 H11.8 Z" stroke-linejoin="round"/><path d="M14.6 289.3 H15.8 M17.4 289.3 H18.6 M20.2 289.3 H21.4" stroke-width="1.2"/><path d="M16.2 327.4 L18.6 329.8 L23.6 324.6" stroke-width="1.2"/><circle cx="16.2" cy="362.2" r="6.6"/><path d="M16.2 359 V366" stroke-width="1.1"/></g><g stroke="#4a4a4a" fill="none" stroke-width="1.05"><rect x="1177.5" y="209.5" width="14.5" height="11" rx=".8"/><rect x="1180.8" y="212.4" width="8" height="5.2" fill="#8a8a8a" stroke="#555" stroke-width="1"/><path d="M1177.5 212.4 H1180.3 M1177.5 217.6 H1180.3 M1189.2 212.4 H1192 M1189.2 217.6 H1192 M1183 209.6 V212 M1186.5 209.6 V212 M1183 218 V220.4 M1186.5 218 V220.4" stroke-width=".6" stroke="#888"/></g><g stroke="#8f8f8f" fill="none" stroke-width="1"><rect x="1177.4" y="246.4" width="14.4" height="10.2" rx=".6"/><path d="M1182.2 246.4 V256.6 M1187 246.4 V256.6 M1177.4 249.8 H1191.8 M1177.4 253.2 H1191.8"/><path d="M1181 291 H1178.4 V282.6 H1187 V284.4"/><circle cx="1186.6" cy="289.8" r="5"/><rect x="1178.2" y="318.6" width="13.4" height="13" rx=".6"/><circle cx="1181.4" cy="321.8" r="1.1"/><path d="M1178.4 329.4 L1182.8 325 L1185.6 327.6 L1188.2 325.2 L1191.4 328.2"/><rect x="1178.4" y="364.6" width="3" height="4.4" rx=".5"/><rect x="1183.4" y="360.6" width="3" height="8.4" rx=".5"/><rect x="1188.4" y="356" width="3" height="13" rx=".5"/><path d="M1186.2 393 V405.4 M1188.6 393 V405.4 M1184.4 393 H1189.6" stroke-width="1"/><path d="M1186.2 393 H1183.8 A3.4 3.4 0 0 0 1183.8 399.8 H1186.2 Z" fill="#8f8f8f"/><path d="M1180 443.6 Q1184.6 439.4 1189.2 443.6"/><rect x="1178.2" y="466.2" width="3" height="2.8"/><rect x="1183.8" y="466.2" width="8" height="2.8"/><rect x="1178.2" y="471.6" width="3" height="8"/><path d="M1191.4 472.6 V475.4 Q1191.4 477.6 1189 477.6 H1184.8 M1186.6 475.6 L1184.6 477.6 L1186.6 479.6"/><path d="M1189.6 511 V503 H1179 V516 H1186.4"/><path d="M1180.6 505.4 H1188 M1180.6 507.6 H1188 M1180.6 509.8 H1188" stroke-width=".8"/><path d="M1186.2 512.4 H1192.8 L1190.2 515.2 V518.6 L1188.8 517.6 V515.2 Z" fill="#777" stroke-width=".8" stroke="#777"/></g></svg>
<div class="t" style="left:8.4px;top:318.27px;font-size:7px;color:#333;font-weight:bold;letter-spacing:-0.5px;">АБВ</div>
<div class="t" style="left:1178.4px;top:429.73px;font-size:12.6px;color:#8f8f8f;letter-spacing:-0.6px;">Ta</div>
<svg style="left:0;top:0" width="1200" height="800" viewBox="0 0 1200 800"><path d="M15 723.3 L22.4 719 V727.6 Z M45.8 723.3 L38.4 719 V727.6 Z" fill="#9c9c9c"/><g stroke="#555" fill="none" stroke-width="1.05"><path d="M77 722.6 H86.8 M81.9 717.7 V727.5"/><path d="M99.2 718.4 H109.8 M99.2 721.3 H109.8 M99.2 724.2 H109.8 M99.2 727.1 H109.8" stroke="#777"/><path d="M1046 722.6 H1055.8"/><path d="M1150.6 722.6 H1160.2 M1155.4 717.8 V727.4"/></g></svg>
<div class="a" style="left:471.8px;top:277.8px;width:182.4px;height:372px;background:#fff;border-radius:3px;box-shadow:0 3px 10px rgba(0,0,0,0.2),0 0 1.5px rgba(0,0,0,0.35)"></div>
<div class="a" style="left:471.8px;top:619.5px;width:182.4px;height:24.5px;background:#d8dadc;"></div>
<div class="a" style="left:471.8px;top:362.1px;width:182.4px;height:1px;background:#d8d8d8;"></div>
<div class="a" style="left:471.8px;top:446.1px;width:182.4px;height:1px;background:#d8d8d8;"></div>
<div class="a" style="left:471.8px;top:530.1px;width:182.4px;height:1px;background:#d8d8d8;"></div>
<div class="a" style="left:471.8px;top:614.5px;width:182.4px;height:1px;background:#d8d8d8;"></div>
<div class="t" style="left:499.3px;top:289.38px;font-size:10.65px;color:#444;">Вырезать</div>
<div class="t" style="left:499.3px;top:314.78px;font-size:10.65px;color:#444;">Копировать</div>
<div class="t" style="left:499.3px;top:339.98px;font-size:10.65px;color:#444;">Вставить</div>
<div class="t" style="left:499.3px;top:373.78px;font-size:10.65px;color:#444;">Добавить строку сверху</div>
<div class="t" style="left:499.3px;top:398.98px;font-size:10.65px;color:#444;">Удалить</div>
<div class="t" style="left:499.3px;top:424.38px;font-size:10.65px;color:#444;">Очистить</div>
<div class="t" style="left:499.3px;top:457.78px;font-size:10.65px;color:#444;">Числовой формат</div>
<div class="t" style="left:499.3px;top:483.18px;font-size:10.65px;color:#444;">Условное форматирование</div>
<div class="t" style="left:499.3px;top:508.38px;font-size:10.65px;color:#444;">Выбрать из списка</div>
<div class="t" style="left:499.3px;top:542.18px;font-size:10.65px;color:#444;">Задать высоту строки</div>
<div class="t" style="left:499.3px;top:567.38px;font-size:10.65px;color:#444;">Скрыть</div>
<div class="t" style="left:499.3px;top:592.78px;font-size:10.65px;color:#444;">Показать</div>
<div class="t" style="left:499.3px;top:626.28px;font-size:10.65px;color:#444;">Закрепить области</div>
<svg style="left:638.4px;top:427.1px" width="3" height="5" viewBox="0 0 3 5"><path d="M0.2 0 L3 2.5 L0.2 5 Z" fill="#444"/></svg>
<svg style="left:638.4px;top:460.5px" width="3" height="5" viewBox="0 0 3 5"><path d="M0.2 0 L3 2.5 L0.2 5 Z" fill="#444"/></svg>
<svg style="left:638.4px;top:545px" width="3" height="5" viewBox="0 0 3 5"><path d="M0.2 0 L3 2.5 L0.2 5 Z" fill="#444"/></svg>
<svg style="left:0;top:0" width="1200" height="800" viewBox="0 0 1200 800"><g stroke="#444" fill="none" stroke-width="1"><circle cx="480.4" cy="292" r="1.9"/><circle cx="480.4" cy="298.8" r="1.9"/><path d="M482 293 L493 300.4 M482 297.8 L493 290.6"/><path d="M481.8 323.6 H478.6 V315 H487 V317.8" stroke-width="1.1" stroke-linejoin="round"/><rect x="482" y="318" width="9" height="8.6" rx=".6" stroke-width="1.1"/><path d="M481.8 349.4 H478.6 V340.6 H487 V343.2" stroke-width="1.1" stroke-linejoin="round"/><rect x="482" y="343.5" width="9" height="8.9" rx=".6" stroke-width="1.1"/><path d="M486.8 424.6 L492.4 429.2 L485.8 435.2 H481.8 L479.2 432.8 Q478.7 432.1 479.4 431.4 Z" stroke-linejoin="round"/><path d="M482.6 428.4 L488.2 433.2 M485.4 435.3 H492.6"/></g><rect x="484.5" y="321.2" width="4" height="3" fill="#8a8a8a"/><rect x="484.5" y="347" width="4" height="3" fill="#8a8a8a"/><rect x="480.8" y="339" width="4.6" height="2.1" fill="#333"/></svg>
<svg style="left:0;top:0" width="1200" height="800" viewBox="0 0 1200 800"><g fill="none" stroke="#e91a31" stroke-linecap="round" stroke-linejoin="round"><path d="M145.6 85.4 L60.2 270.4" stroke-width="5.5"/><path d="M51.2 250.4 L60.2 271 L80.6 264" stroke-width="5"/><path d="M697.3 448.2 L638.8 624.4" stroke-width="5.1"/><path d="M627.9 603.8 L638.7 624.8 L659.2 614.6" stroke-width="4.7"/></g></svg>
</div>
</body></html>
